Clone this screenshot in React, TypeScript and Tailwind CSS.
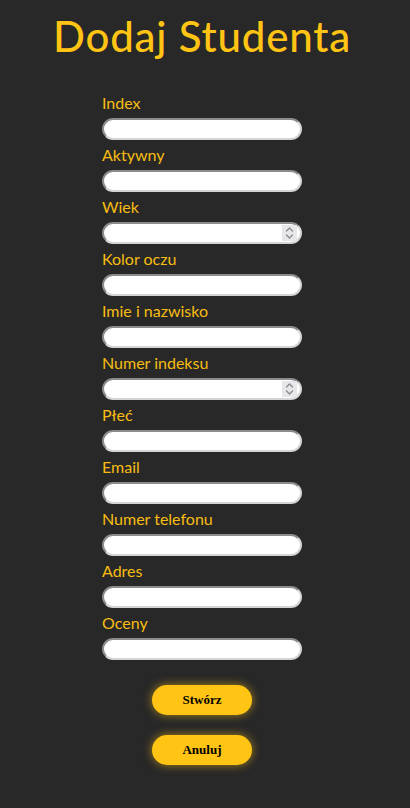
const fields: { label: string; spin?: boolean }[] = [
  { label: 'Index' },
  { label: 'Aktywny' },
  { label: 'Wiek', spin: true },
  { label: 'Kolor oczu' },
  { label: 'Imie i nazwisko' },
  { label: 'Numer indeksu', spin: true },
  { label: 'Płeć' },
  { label: 'Email' },
  { label: 'Numer telefonu' },
  { label: 'Adres' },
  { label: 'Oceny' },
];

function Spinner() {
  return (
    <div className="absolute right-[5px] top-[3px] w-[15px] h-[16px] bg-[#e6e6eb] flex items-center justify-center pointer-events-none">
      <svg width="9" height="14" viewBox="0 0 9 14" fill="none" stroke="#8a8a8a" strokeWidth="1.3" strokeLinecap="round" strokeLinejoin="round">
        <path d="M1.5 5 L4.5 2 L7.5 5" />
        <path d="M1.5 9 L4.5 12 L7.5 9" />
      </svg>
    </div>
  );
}

export default function App() {
  return (
    <div className="min-h-[808px] bg-[#282828] font-['Lato','Noto_Sans',sans-serif]">
      <div className="w-[404px] flex flex-col items-center">
        <h1 className="mt-[12px] text-[42px] leading-[48px] font-medium text-[#ffc414] tracking-[0.8px]">
          Dodaj Studenta
        </h1>

        <form className="mt-[31px] flex flex-col w-[200px]">
          {fields.map((f) => (
            <div key={f.label} className="flex flex-col">
              <label className="h-[27px] text-[16px] leading-[24px] text-[#f7bd12]">{f.label}</label>
              <div className="relative">
                <input
                  type="text"
                  className="block h-[22px] w-[200px] rounded-full bg-white border-2 border-solid border-t-[#8c8c8c] border-l-[#8c8c8c] border-b-[#d4d4d4] border-r-[#d4d4d4] px-2 text-[13px] outline-none"
                />
                {f.spin && <Spinner />}
              </div>
              <div className="h-[3px]" />
            </div>
          ))}
        </form>

        <div className="mt-[22px] flex flex-col items-center gap-[20px]">
          <button className="w-[100px] h-[30px] rounded-full bg-[#ffc414] shadow-[0_0_10px_rgba(255,196,20,0.6)] font-['Liberation_Serif',serif] font-bold text-[13px] text-black">
            Stwórz
          </button>
          <button className="w-[100px] h-[30px] rounded-full bg-[#ffc414] shadow-[0_0_10px_rgba(255,196,20,0.6)] font-['Liberation_Serif',serif] font-bold text-[13px] text-black">
            Anuluj
          </button>
        </div>
      </div>
    </div>
  );
}
